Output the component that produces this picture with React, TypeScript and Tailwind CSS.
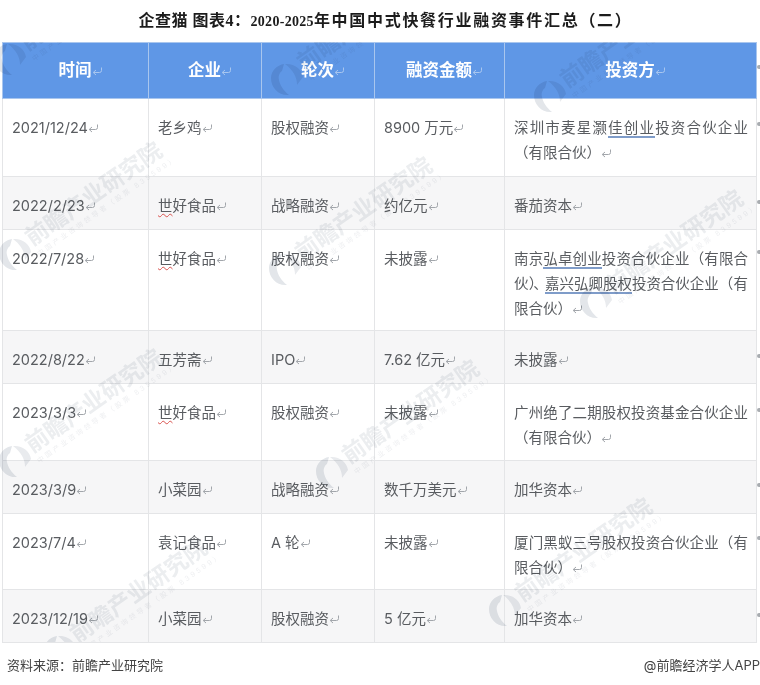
const cjk = "font-['Inter','Noto_Sans_CJK_SC',sans-serif]";

function Ret({ light }: { light?: boolean }) {
  return (
    <svg
      width="11"
      height="9"
      viewBox="0 0 11 9"
      fill="none"
      className={`inline-block align-[0px] ${light ? "text-[#a8c6ef]" : "text-[#a2a6ab]"}`}
    >
      <path d="M9.5 0.5V3.5a2 2 0 0 1-2 2H1.5M4 3L1.2 5.5 4 8" stroke="currentColor" strokeWidth="1" />
    </svg>
  );
}

const marks: [number, number][] = [
  [10, 60],
  [287, 80],
  [550, 97],
  [15, 255],
  [285, 270],
  [596, 303],
  [15, 462],
  [332, 473],
  [505, 611],
  [60, 652],
];

const ticks = [65, 122, 200, 250, 354, 408, 483, 536, 613];

function Watermark({ x, y }: { x: number; y: number }) {
  return (
    <div
      className="absolute flex items-center gap-[1px] origin-[18px_18px] -rotate-[35deg] mix-blend-multiply"
      style={{ left: x - 18, top: y - 18 }}
    >
      <svg width="36" height="36" viewBox="0 0 36 36" className="rotate-[35deg] shrink-0">
        <path d="M2 16C2 9 8 3 15 2l-2 7c-3 2-4 6-3 9 1 5 4 10 10 15C10 34 2 26 2 16z" fill="#e3e6ea" />
        <path d="M16 2c9-1 17 5 18 13l-6 8c0-8-4-15-12-21z" fill="#e9ebee" />
      </svg>
      <div className="flex flex-col">
        <span className="text-[#eceef0] text-[23px] leading-[26px] font-bold whitespace-nowrap">前瞻产业研究院</span>
        <span className="text-[#eff0f2] text-[7px] leading-[10px] tracking-[2.5px] whitespace-nowrap">中国产业咨询领导者（股票 839599）</span>
      </div>
    </div>
  );
}

const lk = "border-b-2 border-[#7f9cc9]";

const rows: { h: string; d: string; c: React.ReactNode; r: string; a: string; i: React.ReactNode; alt?: boolean }[] = [
  {
    h: "h-[78px]", d: "2021/12/24", c: "老乡鸡", r: "股权融资", a: "8900 万元",
    i: <>深圳市麦星灏<span className={lk}>佳创业</span>投资合伙企业（有限合伙）</>,
  },
  { h: "h-[53px]", d: "2022/2/23", c: "世好食品", r: "战略融资", a: "约亿元", i: "番茄资本", alt: true },
  {
    h: "h-[101px]", d: "2022/7/28", c: "世好食品", r: "股权融资", a: "未披露",
    i: <>南京<span className={lk}>弘卓创业</span>投资合伙企业（有限合伙<span className="tracking-[-3px]">）、</span><span className="tracking-[-0.3px]"><span className={lk}>嘉兴弘卿股权</span>投资合伙企业</span>（有限合伙）</>,
  },
  { h: "h-[53px]", d: "2022/8/22", c: "五芳斋", r: "IPO", a: "7.62 亿元", i: "未披露", alt: true },
  { h: "h-[77px]", d: "2023/3/3", c: "世好食品", r: "股权融资", a: "未披露", i: "广州绝了二期股权投资基金合伙企业（有限合伙）" },
  { h: "h-[53px]", d: "2023/3/9", c: "小菜园", r: "战略融资", a: "数千万美元", i: "加华资本", alt: true },
  { h: "h-[76px]", d: "2023/7/4", c: "袁记食品", r: "A 轮", a: "未披露", i: "厦门黑蚁三号股权投资合伙企业（有限合伙）" },
  { h: "h-[53px]", d: "2023/12/19", c: "小菜园", r: "股权融资", a: "5 亿元", i: "加华资本", alt: true },
];

function Company({ c }: { c: React.ReactNode }) {
  if (c === "世好食品") {
    return (
      <>
        <span className="underline decoration-wavy decoration-[#d9534f] decoration-1 underline-offset-2">世</span>好食品<Ret />
      </>
    );
  }
  return <>{c}<Ret /></>;
}

export default function App() {
  const td = "border border-[#e4e5e7] align-top pl-[9px] pr-[8px] pt-[16px] leading-[25px]";
  const th = "border border-[#a9c6ee] text-center pl-[10px] font-bold text-white text-[16.5px] bg-[#5f97e6]";
  return (
    <div className={`relative w-[760px] h-[685px] bg-white overflow-hidden ${cjk}`}>
      <h1 className="h-[42px] pt-[9px] pl-[11px] text-center text-[16px] leading-[24px] font-bold text-[#1c1c1c] font-['Liberation_Serif','Noto_Sans_CJK_SC',serif]">
        <span className="tracking-[0.5px]">企查猫 图表4：</span>
        <span className="text-[14px] tracking-[0.3px]">2020-2025</span>
        <span className="tracking-[1.7px]">年中国中式快餐行业融资事件汇总（二）</span>
      </h1>
      <table className="ml-[2px] w-[754px] table-fixed border-collapse text-[14.5px] text-[#595c60]">
        <colgroup>
          <col className="w-[146px]" />
          <col className="w-[113px]" />
          <col className="w-[113px]" />
          <col className="w-[130px]" />
          <col className="w-[252px]" />
        </colgroup>
        <thead>
          <tr className="h-[56px]">
            {["时间", "企业", "轮次", "融资金额", "投资方"].map((t) => (
              <th key={t} className={th}>{t}<Ret light /></th>
            ))}
          </tr>
        </thead>
        <tbody>
          {rows.map((r) => (
            <tr key={r.d} className={`${r.h} ${r.alt ? "bg-[#f6f6f7]" : "bg-white"}`}>
              <td className={td}>{r.d}<Ret /></td>
              <td className={td}><Company c={r.c} /></td>
              <td className={td}>{r.r}<Ret /></td>
              <td className={td}>{r.a}<Ret /></td>
              <td className={`${td} text-justify`}>{r.i}<Ret /></td>
            </tr>
          ))}
        </tbody>
      </table>
      <div className="flex justify-between items-center mt-[14px] pl-[7px] text-[13px] leading-[16px] text-[#444]">
        <span>资料来源：前瞻产业研究院</span>
        <span>@前瞻经济学人APP</span>
      </div>
      <div className="absolute left-0 top-[42px] w-[756px] h-[600px] overflow-hidden pointer-events-none">
        <div className="absolute left-0 top-[-42px] w-[760px] h-[685px]">
          {marks.map(([x, y]) => (
            <Watermark key={`${x}-${y}`} x={x} y={y} />
          ))}
        </div>
      </div>
      {ticks.map((t) => (
        <span key={t} className="absolute left-[757px] w-[3px] h-[4px] bg-[#a8acb0] rounded-l-full" style={{ top: t }} />
      ))}
    </div>
  );
}
